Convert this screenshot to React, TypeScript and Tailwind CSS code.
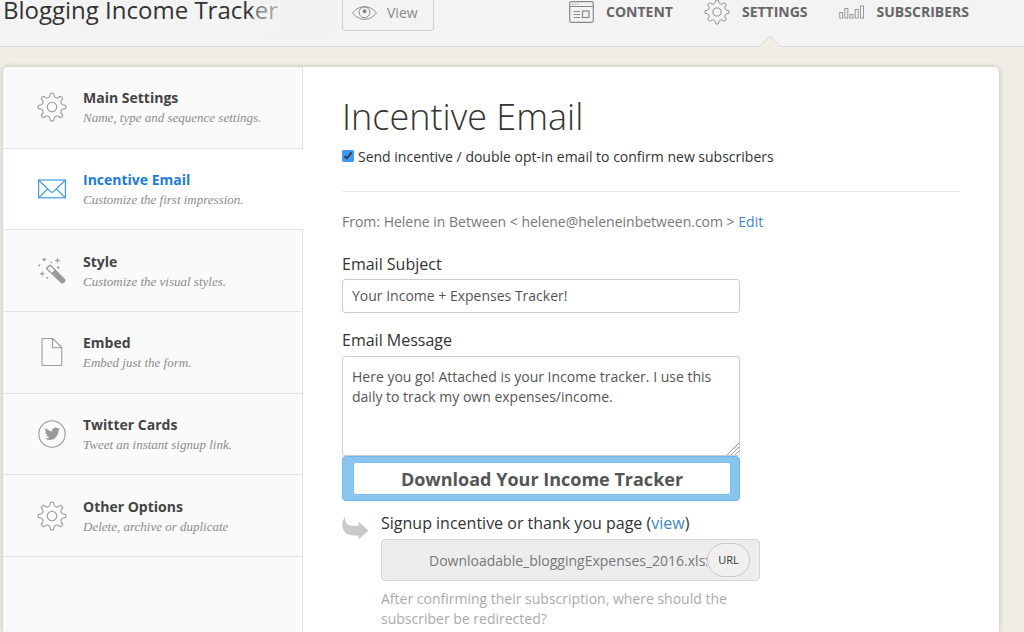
import type { ReactNode } from 'react';

const polar = (radius: number, degrees: number) => {
  const a = ((degrees - 90) * Math.PI) / 180;
  return `${(15 + radius * Math.cos(a)).toFixed(2)} ${(15 + radius * Math.sin(a)).toFixed(2)}`;
};

const gearPath =
  Array.from({ length: 8 }, (_, i) => {
    const a = i * 45;
    return [
      `${i === 0 ? 'M' : 'L'}${polar(13.6, a - 7)}`,
      `Q${polar(14.4, a)} ${polar(13.6, a + 7)}`,
      `L${polar(11.6, a + 10)}`,
      `C${polar(9.6, a + 16)} ${polar(9.6, a + 29)} ${polar(11.6, a + 35)}`,
    ].join(' ');
  }).join(' ') + ' Z';

function GearIcon({ className }: { className: string }) {
  return (
    <svg viewBox="0 0 30 30" className={className} fill="none" stroke="currentColor" strokeWidth="1.1" strokeLinejoin="round" aria-hidden="true">
      <path d={gearPath} />
      <circle cx="15" cy="15" r="4.7" />
    </svg>
  );
}

function EyeIcon() {
  return (
    <svg viewBox="0 0 25 14" className="h-[14px] w-[25px]" fill="none" stroke="currentColor" aria-hidden="true">
      <path d="M.6 7C4 2.8 8 .7 12.500 .7S21 2.800 24.400 7C21 11.200 17 13.300 12.500 13.300S4 11.200 .6 7Z" />
      <circle cx="12.500" cy="6.300" r="5.400" />
      <circle cx="12.500" cy="5.300" r="2" fill="currentColor" stroke="none" />
    </svg>
  );
}

function BrowserIcon() {
  return (
    <svg viewBox="0 0 25 22" className="h-[22px] w-[25px]" fill="none" stroke="currentColor" aria-hidden="true">
      <rect x=".7" y=".7" width="23.600" height="20.600" rx="1.500" strokeWidth="1.200" />
      <path d="M1 5.500H24M4.500 10.500H11M4.500 13.500H11M4.500 16.500H11" />
      <path d="M3 3.200h1.200M5.500 3.200h1.200M8 3.200h1.200" />
      <rect x="13.500" y="10" width="6.500" height="6.500" strokeWidth="1.200" />
    </svg>
  );
}

function BarsIcon() {
  return (
    <svg viewBox="0 0 26 14" className="h-[14px] w-[26px]" fill="none" stroke="currentColor" aria-hidden="true">
      <rect x=".7" y="7.500" width="3" height="5.500" />
      <rect x="5.800" y="3.500" width="3" height="9.500" />
      <rect x="11" y="9.500" width="3" height="3.500" />
      <rect x="16.200" y="4.500" width="3" height="8.500" />
      <rect x="21.500" y="1" width="3" height="12" />
    </svg>
  );
}

function MailIcon() {
  return (
    <svg viewBox="0 0 28 20" className="h-5 w-7" fill="none" stroke="currentColor" strokeWidth="1.200" aria-hidden="true">
      <rect x=".6" y="1" width="26.800" height="17.800" />
      <path d="M.8 1.200 11.800 11.800Q14 14.600 16.200 11.800L27.200 1.200M.8 18.600 9.800 9.800M27.200 18.600 18.200 9.800" />
    </svg>
  );
}

function WandIcon() {
  return (
    <svg viewBox="0 0 28 28" className="size-7" aria-hidden="true">
      <path d="M8.300 10.600 11.200 7.900Q12.200 7.200 13.100 8.100L27.200 22.200Q28 23.800 26.800 25.300 25.300 27 23.400 26.500L8.400 12.300Q7.600 11.400 8.300 10.600Z" fill="currentColor" />
      <path d="M9.500 11.500 12.200 9 16.400 13.200 13.900 15.700Z" fill="#fafafa" />
      <g fill="currentColor">
        <path d="M6.200 0 6.900 1.800 8.700 2.500 6.900 3.200 6.200 5 5.500 3.200 3.700 2.500 5.500 1.800Z" />
        <path d="M19.500 .2 20.300 2.700 22.800 3.500 20.300 4.300 19.500 6.800 18.700 4.300 16.200 3.500 18.700 2.700Z" />
        <path d="M20.300 8.300 20.900 9.900 22.500 10.500 20.900 11.100 20.300 12.700 19.700 11.100 18.100 10.500 19.700 9.900Z" />
        <path d="M4.300 13.700 5 16 7.300 16.700 5 17.400 4.300 19.700 3.600 17.400 1.300 16.700 3.600 16Z" />
        <circle cx="1.300" cy="8.500" r=".9" />
        <circle cx="13.300" cy="5.400" r=".8" />
        <circle cx="9.300" cy="20.800" r="1" />
      </g>
    </svg>
  );
}

function PageIcon() {
  return (
    <svg viewBox="0 0 22 30" className="h-[30px] w-[22px]" fill="none" stroke="currentColor" strokeWidth="1.100" aria-hidden="true">
      <path d="M1 1.500H11.800L20.800 10.500V28.500H1ZM11.500 1.500V10.700H20.800" />
    </svg>
  );
}

function TwitterIcon() {
  return (
    <svg viewBox="0 0 28 28" className="size-7" aria-hidden="true">
      <circle cx="14" cy="14" r="13.200" fill="none" stroke="currentColor" strokeWidth="1.100" />
      <path
        transform="translate(6.600 6.100) scale(.64)"
        fill="currentColor"
        d="M23.953 4.570a10 10 0 01-2.825.775 4.958 4.958 0 002.163-2.723c-.951.555-2.005.959-3.127 1.184a4.920 4.920 0 00-8.384 4.482C7.690 8.095 4.067 6.130 1.640 3.162a4.822 4.822 0 00-.666 2.475c0 1.710.870 3.213 2.188 4.096a4.904 4.904 0 01-2.228-.616v.060a4.923 4.923 0 003.946 4.827 4.996 4.996 0 01-2.212.085 4.936 4.936 0 004.604 3.417 9.867 9.867 0 01-6.102 2.105c-.390 0-.779-.023-1.170-.067a13.995 13.995 0 007.557 2.209c9.053 0 13.998-7.496 13.998-13.985 0-.210 0-.420-.015-.630A9.935 9.935 0 0024 4.590z"
      />
    </svg>
  );
}

function ArrowIcon() {
  return (
    <svg viewBox="0 0 27 24" className="h-6 w-[27px] text-[#c9c9c9]" fill="currentColor" aria-hidden="true">
      <path d="M3.200 0C2.200 6.500 5.500 9.700 11 9.800H16.500V5.800L26.500 14.600 16.500 23.600V19.400H11C2 19.400-3.200 10.500 3.200 0Z" />
    </svg>
  );
}

function GripIcon() {
  return (
    <svg viewBox="0 0 12 12" className="pointer-events-none absolute right-px bottom-px size-3" aria-hidden="true">
      <path d="M0 0H12V12H0Z" fill="#fff" />
      <path d="M0 12 12 0M4 12 12 4M8 12 12 8" stroke="#999" fill="none" />
    </svg>
  );
}

type Item = { title: string; note: string; icon: ReactNode; active?: boolean };

const items: Item[] = [
  { title: 'Main Settings', note: 'Name, type and sequence settings.', icon: <GearIcon className="size-[30px]" /> },
  { title: 'Incentive Email', note: 'Customize the first impression.', icon: <MailIcon />, active: true },
  { title: 'Style', note: 'Customize the visual styles.', icon: <WandIcon /> },
  { title: 'Embed', note: 'Embed just the form.', icon: <PageIcon /> },
  { title: 'Twitter Cards', note: 'Tweet an instant signup link.', icon: <TwitterIcon /> },
  { title: 'Other Options', note: 'Delete, archive or duplicate', icon: <GearIcon className="size-[30px]" /> },
];

function Header() {
  return (
    <header className="flex h-[47px] items-start border-b border-[#d9dbda] bg-[#f3f3f3] pr-[55px]">
      <div className="relative w-[342px] shrink-0 pl-[3px]">
        <h1 className="text-[24px] leading-5 whitespace-nowrap text-[#333]">Blogging Income Tracker</h1>
        <div className="absolute top-0 right-[10px] h-9 w-20 bg-linear-to-r from-[#f2f2f2]/30 to-[#f2f2f2] to-60%" />
      </div>
      <button type="button" className="flex h-[31px] shrink-0 items-center gap-[10px] rounded-b border border-t-0 border-[#d0d0d0] pr-[15px] pb-[5px] pl-[9px] text-[14px] text-[#888]">
        <EyeIcon />
        View
      </button>
      <nav className="ml-auto flex gap-[31px] text-[14px] font-bold text-[#666]">
        <a href="#content" className="flex h-6 items-center gap-3">
          <span className="text-[#888]"><BrowserIcon /></span>
          <span className="pb-[2px]">CONTENT</span>
        </a>
        <a href="#settings" aria-current="page" className="relative flex h-6 items-center gap-3">
          <GearIcon className="size-[26px] text-[#888]" />
          <span className="pb-[2px]">SETTINGS</span>
          <svg viewBox="0 0 22 12" className="absolute top-[35px] left-[55px] h-3 w-[22px]" aria-hidden="true">
            <path d="M0 12 11 1 22 12Z" fill="#efede6" />
            <path d="M.5 11.500 11 1 21.500 11.500" fill="none" stroke="#d9dbda" />
          </svg>
        </a>
        <a href="#subscribers" className="flex h-6 items-center gap-3">
          <span className="text-[#999]"><BarsIcon /></span>
          <span className="pb-[2px]">SUBSCRIBERS</span>
        </a>
      </nav>
    </header>
  );
}

function Sidebar() {
  return (
    <aside className="flex w-[300px] shrink-0 flex-col">
      <ul className="grid min-h-[490px] grid-rows-6">
        {items.map((item) => (
          <li key={item.title} className={item.active ? 'border-b border-[#e2e2e2] bg-white' : 'border-r border-b border-[#e2e2e2] bg-[#fafafa]'}>
            <a href="#section" className="flex h-full items-center pl-8">
              <span className={item.active ? 'flex w-[34px] justify-center text-[#3f9be0]' : 'flex w-[34px] justify-center text-[#9a9a9a]'}>{item.icon}</span>
              <span className="flex flex-col pt-[2px] pl-[14px]">
                <span className={item.active ? 'text-[14px] leading-5 font-bold text-[#1c7cd5]' : 'text-[14px] leading-5 font-bold text-[#444]'}>{item.title}</span>
                <span className="font-['Liberation_Serif',serif] text-[13px] leading-5 text-[#8c8c8c] italic">{item.note}</span>
              </span>
            </a>
          </li>
        ))}
      </ul>
      <div className="flex-1 border-r border-[#e2e2e2] bg-[#fafafa]" />
    </aside>
  );
}

function EmailForm() {
  return (
    <main className="min-w-0 flex-1 px-[39px] pt-6">
      <h2 className="text-[36px] leading-[52px] font-light text-[#333]">Incentive Email</h2>
      <label className="mt-[3px] flex h-5 items-center gap-1 text-[14px] text-[#333]">
        <input type="checkbox" defaultChecked className="size-3 accent-[#3b99fc]" />
        Send incentive / double opt-in email to confirm new subscribers
      </label>
      <hr className="mt-[25px] border-[#ebebeb]" />
      <p className="mt-5 text-[14px] leading-5 text-[#777]">
        From: Helene in Between &lt; helene@heleneinbetween.com &gt;{' '}
        <a href="#edit" className="text-[#3f87c7]">Edit</a>
      </p>
      <div className="max-w-[398px]">
        <label htmlFor="subject" className="mt-5 block text-[16px] leading-6 text-[#333]">Email Subject</label>
        <input id="subject" defaultValue="Your Income + Expenses Tracker!" className="mt-[3px] block h-[34px] w-full rounded-[3px] border border-[#ccc] bg-white px-[9px] pb-[2px] text-[14px] text-[#555]" />
        <label htmlFor="message" className="mt-[15px] block text-[16px] leading-6 text-[#333]">Email Message</label>
        <div className="relative mt-1">
          <textarea
            id="message"
            defaultValue="Here you go! Attached is your Income tracker. I use this daily to track my own expenses/income."
            className="block h-[100px] w-full rounded-[3px] border border-[#ccc] bg-white px-[9px] py-[10px] text-[14px] leading-5 text-[#555]"
          />
          <GripIcon />
        </div>
        <div className="rounded border border-[#6fb5e8] bg-[#8ac5ee] py-[5px] pr-2 pl-[10px]">
          <input aria-label="Button text" defaultValue="Download Your Income Tracker" className="block h-[33px] w-full rounded-[3px] border border-[#7cbdea] bg-white text-center text-[18px] font-bold text-[#555]" />
        </div>
      </div>
      <div className="mt-[10px] flex">
        <div className="w-[39px] shrink-0 pt-[5px]"><ArrowIcon /></div>
        <div className="w-full max-w-[379px]">
          <p className="text-[16px] leading-6 text-[#333]">
            <label htmlFor="incentive">Signup incentive or thank you page</label> (<a href="#view" className="text-[#3f87c7]">view</a>)
          </p>
          <div className="mt-1 flex h-[42px] items-center rounded border border-[#d5d5d5] bg-[#ededed] pr-[9px] pl-[47px]">
            <input id="incentive" defaultValue="Downloadable_bloggingExpenses_2016.xlsx" className="min-w-0 flex-1 bg-transparent text-[14px] text-[#777]" />
            <button type="button" className="h-[34px] w-[43px] shrink-0 rounded-full border border-[#c8c8c8] bg-[#efefef] text-[11px] text-[#333]">URL</button>
          </div>
          <p className="mt-2 text-[14px] leading-5 text-[#aaa]">After confirming their subscription, where should the subscriber be redirected?</p>
        </div>
      </div>
    </main>
  );
}

export default function App() {
  return (
    <div className="flex min-h-screen flex-col bg-[#efede6] font-['Open_Sans',sans-serif]">
      <Header />
      <div className="mt-5 mr-[25px] ml-[3px] flex flex-1 overflow-hidden rounded-t-[5px] bg-white shadow-[0_0_5px_rgba(80,70,40,0.3)]">
        <Sidebar />
        <EmailForm />
      </div>
    </div>
  );
}
